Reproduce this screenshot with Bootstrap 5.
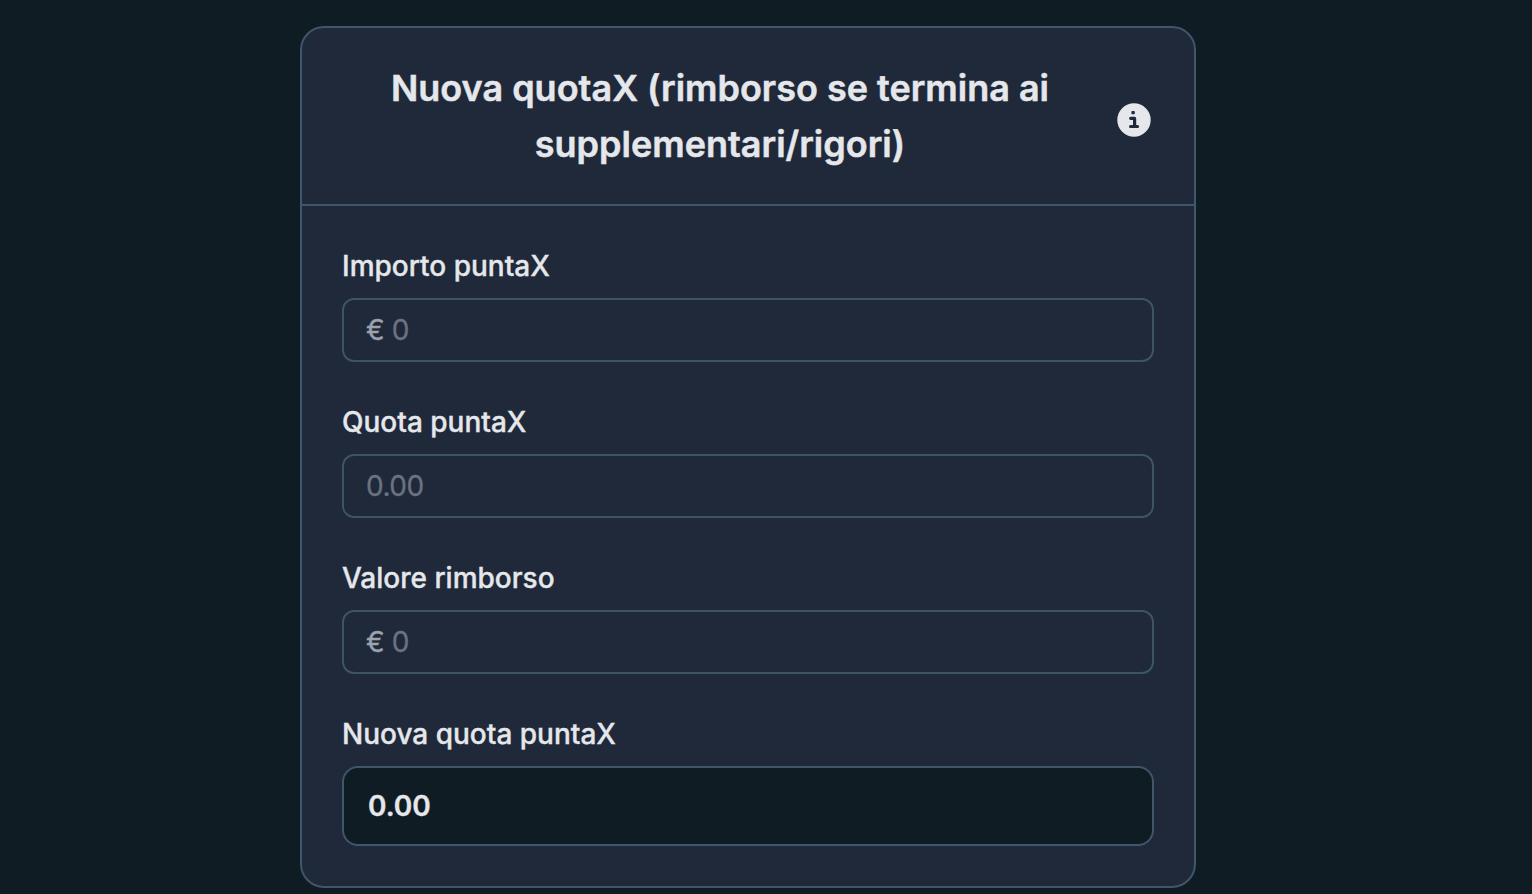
<!DOCTYPE html>
<html lang="it">
<head>
<meta charset="utf-8">
<title>Nuova quotaX</title>
<link rel="stylesheet" href="https://cdn.jsdelivr.net/npm/bootstrap@5.3.0/dist/css/bootstrap.min.css">
<style>
body{background:#0f1c24;color:#e5e7eb;font-family:Inter,sans-serif;height:894px;overflow:hidden;padding:26px 0 0 300px}
.calc{width:896px;height:862px;background:#1f293a;border:2px solid #40566a;border-radius:24px;color:#e5e7eb}
.calc-head{height:178px;border-bottom:2px solid #40566a;padding:32px 43px 32px 40px}
.calc-title{width:756px;font-size:36px;line-height:56px;font-weight:600;-webkit-text-stroke:.5px currentColor}
.info-icon{width:34px;height:34px;margin-top:8px}
.calc-body{padding:40px}
.form-label{font-size:28px;line-height:40px;font-weight:500;margin-bottom:12px;-webkit-text-stroke:.35px currentColor}
.field{height:64px;border:2px solid #3d5464;border-radius:12px;padding:0 22px;font-size:28px}
.field input{background:none!important;border:0;box-shadow:none!important;font-size:28px;color:#e5e7eb;padding:0;letter-spacing:-.5px}
.field input::placeholder{color:#6b7280;-webkit-text-stroke:.3px #6b7280}
.euro{color:#9ca3af;margin-right:7px;-webkit-text-stroke:.35px currentColor}
.result{height:80px;border:2px solid #40566a;border-radius:16px;background:#0f1c24;padding:0 24px;font-size:28px;font-weight:600;-webkit-text-stroke:.35px currentColor}
.group{margin-bottom:40px}
</style>
</head>
<body>
<main class="card calc">
<header class="calc-head d-flex align-items-start justify-content-between">
<h1 class="calc-title text-center m-0">Nuova quotaX (rimborso se termina ai supplementari/rigori)</h1>
<svg class="info-icon flex-shrink-0 align-self-center" viewBox="0 0 34 34"><circle cx="17" cy="17" r="16.700" fill="#e5e7eb"/><rect x="14.400" y="8" width="3.400" height="3.200" rx="1" fill="#1f293a"/><path d="M13.700 15.300h3.900v8.200M13.600 23.500h6.900" fill="none" stroke="#1f293a" stroke-width="3.200" stroke-linecap="round" stroke-linejoin="round"/></svg>
</header>
<div class="calc-body">
<div class="group"><label class="form-label d-block" for="stake">Importo puntaX</label><div class="field d-flex align-items-center"><span class="euro">€</span><input class="form-control" id="stake" placeholder="0"></div></div>
<div class="group"><label class="form-label d-block" for="odds">Quota puntaX</label><div class="field d-flex align-items-center"><input class="form-control" id="odds" placeholder="0.00"></div></div>
<div class="group"><label class="form-label d-block" for="refund">Valore rimborso</label><div class="field d-flex align-items-center"><span class="euro">€</span><input class="form-control" id="refund" placeholder="0"></div></div>
<div><div class="form-label">Nuova quota puntaX</div><div class="result d-flex align-items-center">0.00</div></div>
</div>
</main>
<script src="https://cdn.jsdelivr.net/npm/bootstrap@5.3.0/dist/js/bootstrap.bundle.min.js"></script>
</body>
</html>
